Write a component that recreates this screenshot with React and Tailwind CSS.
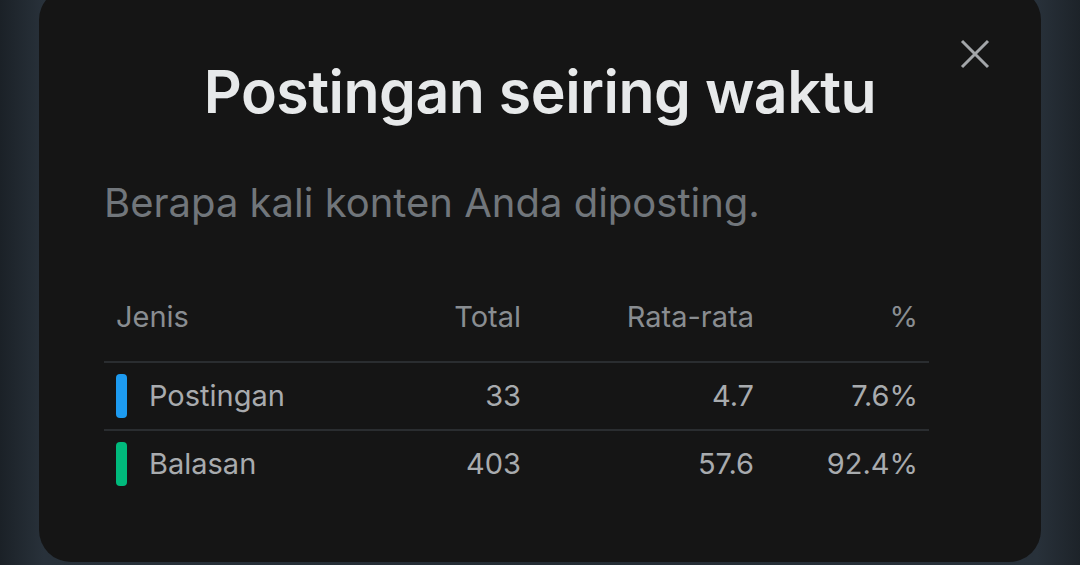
import React from "react";

const rows = [
  { name: "Postingan", total: "33", avg: "4.7", pct: "7.6%", color: "bg-[#1d9bf0]" },
  { name: "Balasan", total: "403", avg: "57.6", pct: "92.4%", color: "bg-[#00ba7c]" },
];

const cols = "grid grid-cols-[295px_110px_233px_164px] pl-[12px] pr-[11px]";

function CloseIcon() {
  return (
    <svg width="30" height="30" viewBox="0 0 30 30" fill="none">
      <path d="M2 2 L28 28 M28 2 L2 28" stroke="currentColor" strokeWidth="3" strokeLinecap="butt" />
    </svg>
  );
}

function PostsOverTime() {
  return (
    <div className="relative -mt-[12px] h-[574px] w-[1002px] shrink-0 rounded-[32px] bg-[#151515] px-[65px] pt-[66px]">
      <button className="absolute right-[51px] top-[51px] text-[#a3a6a9]">
        <CloseIcon />
      </button>

      <h1 className="text-center text-[59px] font-semibold leading-[76px] tracking-[-0.5px] text-[#e7e9ea]">
        Postingan seiring waktu
      </h1>

      <p className="mt-[49px] text-[40px] leading-[48px] text-[#71767b]">
        Berapa kali konten Anda diposting.
      </p>

      {/* table */}
      <div className="mt-[62px] w-[825px] text-[29px]">
        <div className={`${cols} h-[56px] items-center text-[#898d91]`}>
          <span>Jenis</span>
          <span className="text-right">Total</span>
          <span className="text-right">Rata-rata</span>
          <span className="text-right">%</span>
        </div>
        <div className="mt-[16px]">
          {rows.map((r) => (
            <div
              key={r.name}
              className={`${cols} h-[68px] items-center border-t-2 border-[#2a2d30] text-[#a8abae]`}
            >
              <span className="flex items-center gap-[22px]">
                <span className={`h-[44px] w-[11px] rounded-[4px] ${r.color}`} />
                {r.name}
              </span>
              <span className="text-right">{r.total}</span>
              <span className="text-right">{r.avg}</span>
              <span className="text-right">{r.pct}</span>
            </div>
          ))}
        </div>
      </div>
    </div>
  );
}

export default function App() {
  return (
    <div
      className="flex h-[565px] w-[1080px] justify-center overflow-hidden bg-[linear-gradient(90deg,#1b2127_0%,#28313a_4%,#242c34_50%,#28313a_96%,#1d2329_100%)]"
      style={{ fontFamily: "Inter, 'Noto Sans', sans-serif" }}
    >
      <PostsOverTime />
    </div>
  );
}
